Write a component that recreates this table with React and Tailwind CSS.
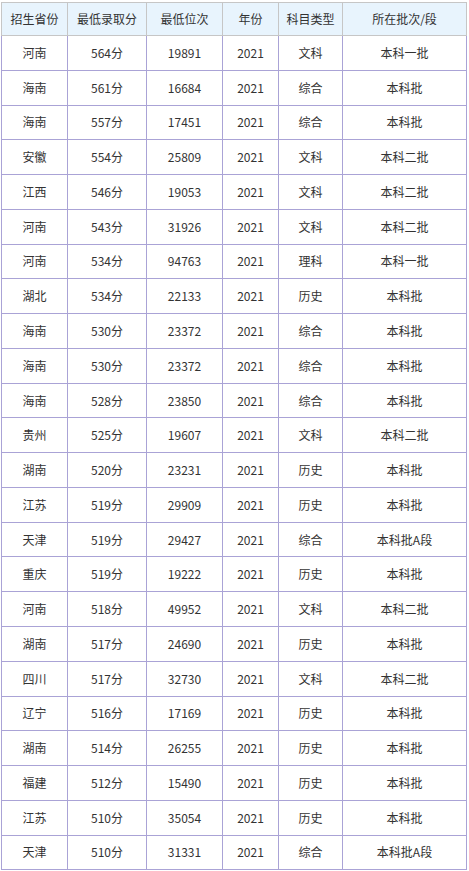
import React from "react";

const rows = [
  ["河南", "564分", "19891", "2021", "文科", "本科一批"],
  ["海南", "561分", "16684", "2021", "综合", "本科批"],
  ["海南", "557分", "17451", "2021", "综合", "本科批"],
  ["安徽", "554分", "25809", "2021", "文科", "本科二批"],
  ["江西", "546分", "19053", "2021", "文科", "本科二批"],
  ["河南", "543分", "31926", "2021", "文科", "本科二批"],
  ["河南", "534分", "94763", "2021", "理科", "本科一批"],
  ["湖北", "534分", "22133", "2021", "历史", "本科批"],
  ["海南", "530分", "23372", "2021", "综合", "本科批"],
  ["海南", "530分", "23372", "2021", "综合", "本科批"],
  ["海南", "528分", "23850", "2021", "综合", "本科批"],
  ["贵州", "525分", "19607", "2021", "文科", "本科二批"],
  ["湖南", "520分", "23231", "2021", "历史", "本科批"],
  ["江苏", "519分", "29909", "2021", "历史", "本科批"],
  ["天津", "519分", "29427", "2021", "综合", "本科批A段"],
  ["重庆", "519分", "19222", "2021", "历史", "本科批"],
  ["河南", "518分", "49952", "2021", "文科", "本科二批"],
  ["湖南", "517分", "24690", "2021", "历史", "本科批"],
  ["四川", "517分", "32730", "2021", "文科", "本科二批"],
  ["辽宁", "516分", "17169", "2021", "历史", "本科批"],
  ["湖南", "514分", "26255", "2021", "历史", "本科批"],
  ["福建", "512分", "15490", "2021", "历史", "本科批"],
  ["江苏", "510分", "35054", "2021", "历史", "本科批"],
  ["天津", "510分", "31331", "2021", "综合", "本科批A段"],
];

const headers = ["招生省份", "最低录取分", "最低位次", "年份", "科目类型", "所在批次/段"];
const widths = ["w-[66px]", "w-[79px]", "w-[76px]", "w-[56px]", "w-[64px]", "w-[124px]"];

export default function App() {
  return (
    <div className="bg-white pt-[2px] pl-px w-[469px] h-[871px] overflow-hidden font-['Microsoft_YaHei','Noto_Sans_CJK_SC',sans-serif] text-[12px] text-[#333]">
      <table className="border-collapse table-fixed w-[466px]">
        <thead>
          <tr className="h-[33px] bg-[#e8f4fd]">
            {headers.map((h, i) => (
              <th
                key={h}
                className={`${widths[i]} border border-[#c6c6c6] font-normal text-center p-0`}
              >
                {h}
              </th>
            ))}
          </tr>
        </thead>
        <tbody>
          {rows.map((r, i) => (
            <tr key={i} className="h-[34.78px]">
              {r.map((c, j) => (
                <td key={j} className="border border-[#aaa3d6] text-center p-0">
                  {c}
                </td>
              ))}
            </tr>
          ))}
        </tbody>
      </table>
    </div>
  );
}
